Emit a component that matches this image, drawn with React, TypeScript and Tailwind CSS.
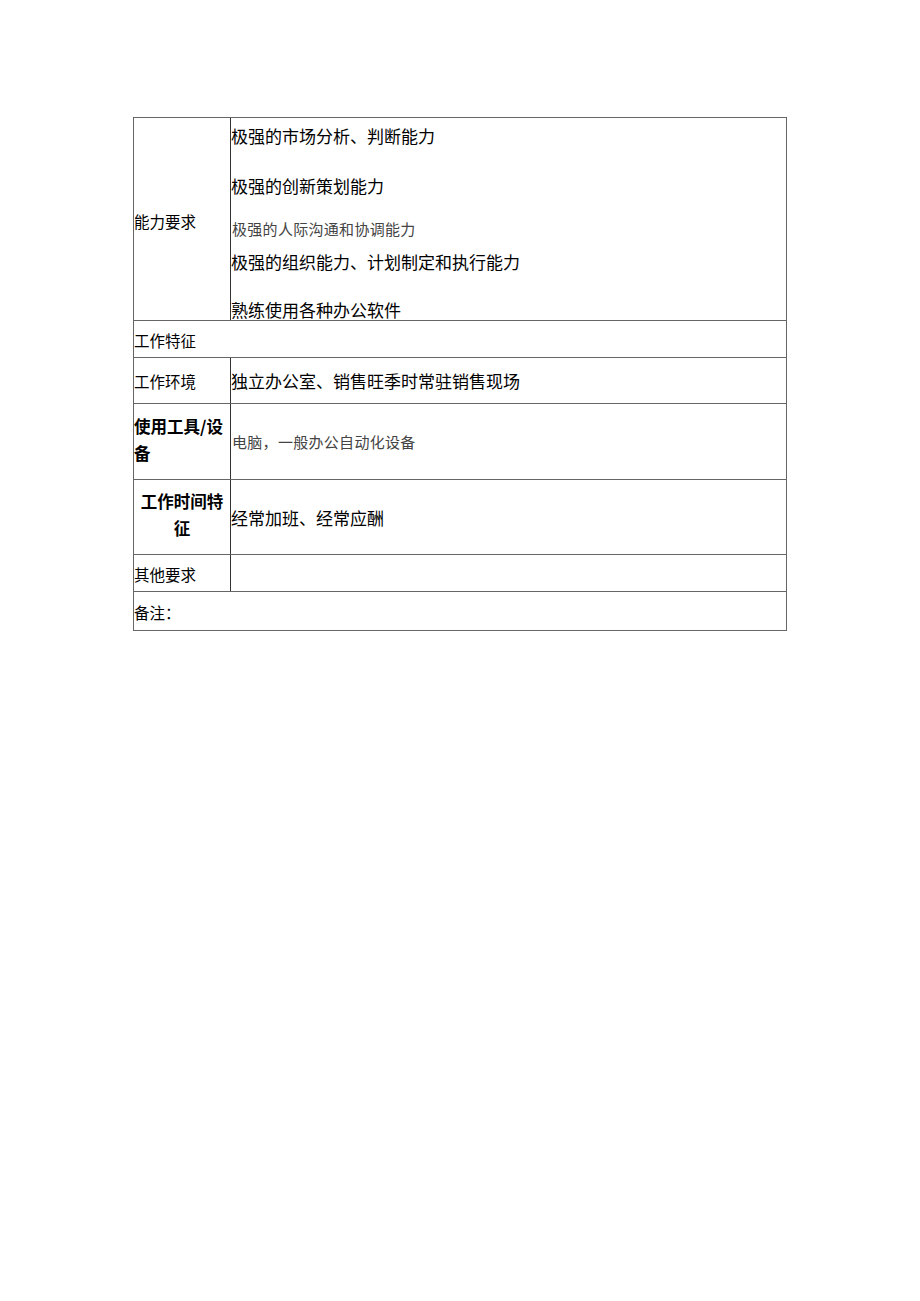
import React from "react";

const sans = { fontFamily: '"Noto Sans CJK SC", "Liberation Sans", sans-serif' };

export default function App() {
  return (
    <div className="min-h-[1301px] w-[920px] bg-white pt-[117px] pl-[133px] text-black" style={sans}>
      <div className="w-[654px] border border-[#666]">
        {/* Row 1 */}
        <div className="flex h-[203px] border-b border-[#666] box-border">
          <div className="flex w-[97px] shrink-0 items-center border-r border-[#333] pt-[4px] text-[15.5px] leading-[20px]">
            能力要求
          </div>
          <div className="flex-1 overflow-hidden text-[17px] leading-[20px]">
            <div className="mt-[8px] h-[20px] whitespace-nowrap">极强的市场分析、判断能力</div>
            <div className="mt-[30px] h-[20px] whitespace-nowrap">极强的创新策划能力</div>
            <div className="mt-[23px] h-[20px] whitespace-nowrap pl-[1px] text-[15px] tracking-[0.3px] text-[#444]">
              极强的人际沟通和协调能力
            </div>
            <div className="mt-[13px] h-[20px] whitespace-nowrap">极强的组织能力、计划制定和执行能力</div>
            <div className="mt-[28px] h-[20px] whitespace-nowrap">熟练使用各种办公软件</div>
          </div>
        </div>
        {/* Row 2 */}
        <div className="flex h-[37px] items-center border-b border-[#666] box-border pt-[1px] text-[15.5px] leading-[20px]">
          工作特征
        </div>
        {/* Row 3 */}
        <div className="flex h-[46px] border-b border-[#666] box-border">
          <div className="flex w-[97px] shrink-0 items-center border-r border-[#333] pt-[1px] text-[15.5px] leading-[20px]">
            工作环境
          </div>
          <div className="flex flex-1 items-center whitespace-nowrap pt-[1px] text-[17px] leading-[20px]">
            独立办公室、销售旺季时常驻销售现场
          </div>
        </div>
        {/* Row 4 */}
        <div className="flex h-[76px] border-b border-[#666] box-border">
          <div className="flex w-[97px] shrink-0 flex-col justify-center border-r border-[#333] pb-[3px] text-[16.5px] font-bold leading-[27px]">
            <div className="whitespace-nowrap">使用工具/设</div>
            <div>备</div>
          </div>
          <div className="flex flex-1 items-center whitespace-nowrap pl-[1px] text-[15px] tracking-[0.3px] text-[#444] leading-[20px]">
            电脑，一般办公自动化设备
          </div>
        </div>
        {/* Row 5 */}
        <div className="flex h-[75px] border-b border-[#666] box-border">
          <div className="flex w-[97px] shrink-0 flex-col items-center justify-center border-r border-[#333] pb-[5px] text-center text-[16.5px] font-bold leading-[27px]">
            <div className="whitespace-nowrap">工作时间特</div>
            <div>征</div>
          </div>
          <div className="flex flex-1 items-center whitespace-nowrap pt-[2px] text-[17px] leading-[20px]">
            经常加班、经常应酬
          </div>
        </div>
        {/* Row 6 */}
        <div className="flex h-[37px] border-b border-[#666] box-border">
          <div className="flex w-[97px] shrink-0 items-center border-r border-[#333] pt-[1px] text-[15.5px] leading-[20px]">
            其他要求
          </div>
          <div className="flex-1" />
        </div>
        {/* Row 7 */}
        <div className="flex h-[38px] items-center pt-[1px] text-[15.5px] leading-[20px]">备注：</div>
      </div>
    </div>
  );
}
